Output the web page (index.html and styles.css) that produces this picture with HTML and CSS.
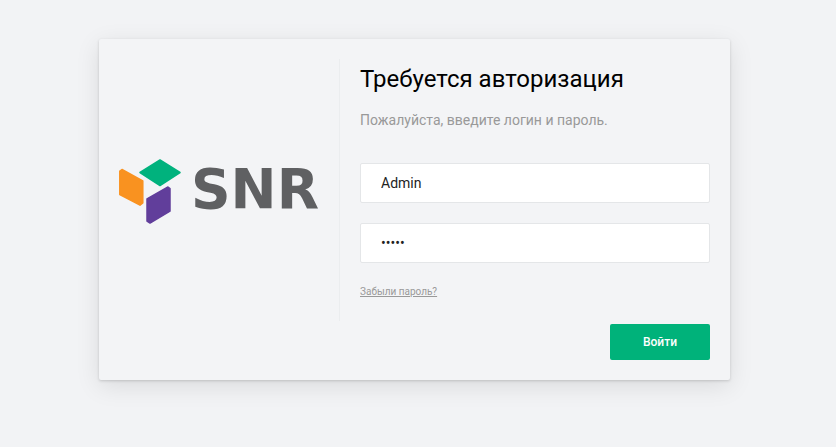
FILE: index.html
```html
<!DOCTYPE html>
<html lang="en">

<head>
    <meta charset="UTF-8">
    <meta name="viewport" content="width=device-width, initial-scale=1.0">
    <title>Авторизация</title>
    <link rel="stylesheet" href="styles.css">
</head>

<body>
    <div class="login-card">
        <div class="logo-side">
            <svg class="logo-mark" width="64" height="66" viewBox="118 158 64 66">
                <polygon fill="#00b27d" stroke="#00b27d" stroke-width="1.5" stroke-linejoin="round" points="140,172.5 160,160 180,172.5 160,185.5" />
                <polygon fill="#f99220" stroke="#f99220" stroke-width="1.5" stroke-linejoin="round" points="119.8,171 122,169.5 142.8,181 142.8,203 140,205.2 119.8,194.5" />
                <polygon fill="#613e9b" stroke="#613e9b" stroke-width="1.5" stroke-linejoin="round" points="147,198.8 168,187 170,188.5 170,211.2 150,223 147,221.2" />
            </svg>
            <span class="logo-name">SNR</span>
        </div>
        <form class="form-side">
            <h1 class="form-title">Требуется авторизация</h1>
            <p class="form-hint">Пожалуйста, введите логин и пароль.</p>
            <input class="text-field" type="text" value="Admin">
            <input class="text-field" type="password" value="admin">
            <a class="forgot-link" href="#">Забыли пароль?</a>
            <div class="form-actions">
                <button class="submit-btn" type="button">Войти</button>
            </div>
        </form>
    </div>
</body>

</html>
```
FILE: styles.css
```css
html {
    background-color: #f2f3f5;
}

body {
    display: flex;
    align-items: flex-start;
    min-height: 100vh;
    margin: 0;
    padding: 39px 0 0 99px;
    box-sizing: border-box;
    font-family: Roboto, "Liberation Sans", sans-serif;
}

.login-card {
    display: flex;
    width: 631px;
    height: 341px;
    padding: 20px;
    box-sizing: border-box;
    background-color: #f3f4f6;
    border-radius: 2px;
    box-shadow: 0 1px 3px rgba(0, 0, 0, .16), 0 6px 24px rgba(0, 0, 0, .1);
}

.logo-side {
    display: flex;
    align-items: center;
    gap: 9px;
    width: 220px;
    height: 262px;
    flex-shrink: 0;
    border-right: 1px solid #ebedef;
}

.logo-mark {
    flex-shrink: 0;
    margin: 2px 0 0 -1px;
}

.logo-name {
    margin-top: -2px;
    font-family: "DejaVu Sans", sans-serif;
    font-size: 55px;
    font-weight: 700;
    line-height: 1;
    color: #5f6062;
}

.form-side {
    display: flex;
    flex-direction: column;
    flex: 1;
    padding-left: 20px;
}

.form-title {
    margin: -1px 0 0;
    font-size: 24px;
    font-weight: 400;
    line-height: 42px;
    color: #000;
}

.form-hint {
    margin: 10px 0 0;
    font-size: 14px;
    line-height: 20px;
    color: #999;
}

.text-field {
    flex-shrink: 0;
    height: 40px;
    margin-top: 20px;
    padding: 0 20px;
    box-sizing: border-box;
    border: 1px solid #e4e6e8;
    border-radius: 2px;
    background-color: #fff;
    font-family: inherit;
    font-size: 14px;
    color: #222;
}

.form-hint + .text-field {
    margin-top: 33px;
}

.forgot-link {
    align-self: flex-start;
    margin-top: 22px;
    font-size: 10px;
    line-height: 14px;
    color: #999;
}

.form-actions {
    display: flex;
    justify-content: flex-end;
    margin-top: 25px;
}

.submit-btn {
    width: 100px;
    height: 36px;
    border: none;
    border-radius: 2px;
    background-color: #00b27a;
    font-family: inherit;
    font-size: 12px;
    font-weight: 500;
    color: #fff;
}
```
